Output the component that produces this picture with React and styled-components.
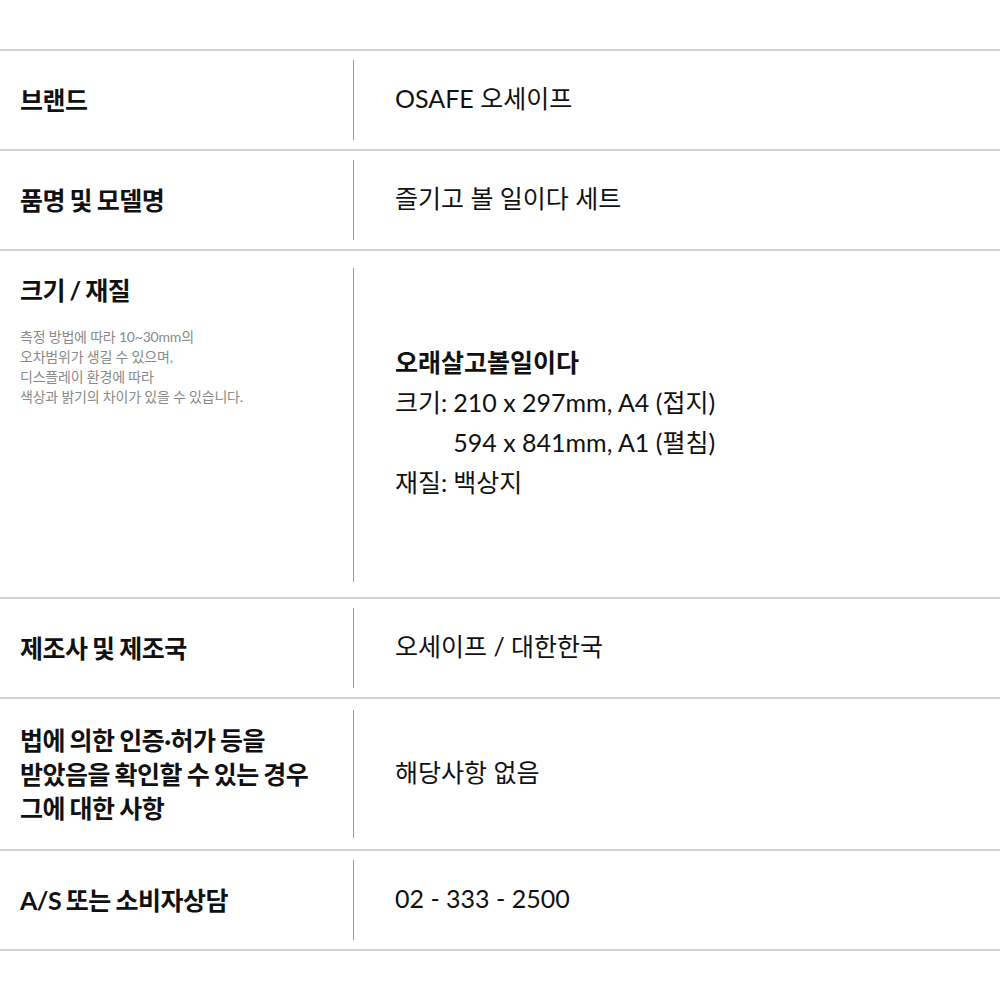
import styled, { createGlobalStyle } from "styled-components";

const GlobalStyle = createGlobalStyle`
    html, body {
        margin: 0;
        padding: 0;
        background: #fff;
    }
    body {
        font-family: "Lato", "Noto Sans CJK KR", "Noto Sans", sans-serif;
        color: #111;
    }
`;

const Page = styled.div`
    width: 1000px;
    padding-top: 49px;
`;

const Table = styled.div`
    border-top: 2px solid #d2d2d2;
`;

const Row = styled.div`
    display: flex;
    height: ${props => props.$h}px;
    border-bottom: 2px solid #d2d2d2;
    box-sizing: content-box;
`;

const Label = styled.div`
    width: 353px;
    box-sizing: border-box;
    padding: ${props => props.$top ? "22px 20px 0" : "0 20px"};
    display: flex;
    flex-direction: column;
    justify-content: ${props => props.$top ? "flex-start" : "center"};
    font-size: 25px;
    font-weight: 700;
    line-height: 34px;
    letter-spacing: -0.5px;
    word-spacing: -1px;
    color: #111;
`;

const Title = styled.div``;

const Note = styled.div`
    margin-top: 20px;
    font-size: 14px;
    font-weight: 400;
    line-height: 20px;
    color: #8a8a8a;
    letter-spacing: -0.2px;
    word-spacing: 0;
`;

const Divider = styled.div`
    width: 1px;
    background: #999;
    margin: ${props => props.$inset || "9px 0 9px"};
`;

const Value = styled.div`
    flex: 1;
    padding: 0 0 4px 41px;
    display: flex;
    flex-direction: column;
    justify-content: center;
    font-size: 25px;
    line-height: 40px;
    color: #111;
`;

const Heading = styled.div`
    font-weight: 700;
`;

const SpecGrid = styled.div`
    display: grid;
    grid-template-columns: auto 1fr;
    column-gap: 6px;
`;

function App() {
    return (
        <Page>
            <GlobalStyle />
            <Table>
                <Row $h={98}>
                    <Label>브랜드</Label>
                    <Divider />
                    <Value>OSAFE 오세이프</Value>
                </Row>
                <Row $h={98}>
                    <Label>품명 및 모델명</Label>
                    <Divider />
                    <Value>즐기고 볼 일이다 세트</Value>
                </Row>
                <Row $h={346}>
                    <Label $top>
                        <Title>크기 / 재질</Title>
                        <Note>
                            측정 방법에 따라 10~30mm의<br />
                            오차범위가 생길 수 있으며,<br />
                            디스플레이 환경에 따라<br />
                            색상과 밝기의 차이가 있을 수 있습니다.
                        </Note>
                    </Label>
                    <Divider $inset="17px 0 15px" />
                    <Value>
                        <Heading>오래살고볼일이다</Heading>
                        <SpecGrid>
                            <span>크기:</span>
                            <span>210 x 297mm, A4 (접지)</span>
                            <span />
                            <span>594 x 841mm, A1 (펼침)</span>
                            <span>재질:</span>
                            <span>백상지</span>
                        </SpecGrid>
                    </Value>
                </Row>
                <Row $h={98}>
                    <Label>제조사 및 제조국</Label>
                    <Divider />
                    <Value>오세이프 / 대한한국</Value>
                </Row>
                <Row $h={150}>
                    <Label>
                        법에 의한 인증·허가 등을<br />
                        받았음을 확인할 수 있는 경우<br />
                        그에 대한 사항
                    </Label>
                    <Divider $inset="11px 0 11px" />
                    <Value>해당사항 없음</Value>
                </Row>
                <Row $h={98}>
                    <Label>A/S 또는 소비자상담</Label>
                    <Divider />
                    <Value>02 - 333 - 2500</Value>
                </Row>
            </Table>
        </Page>
    );
}

export default App;
